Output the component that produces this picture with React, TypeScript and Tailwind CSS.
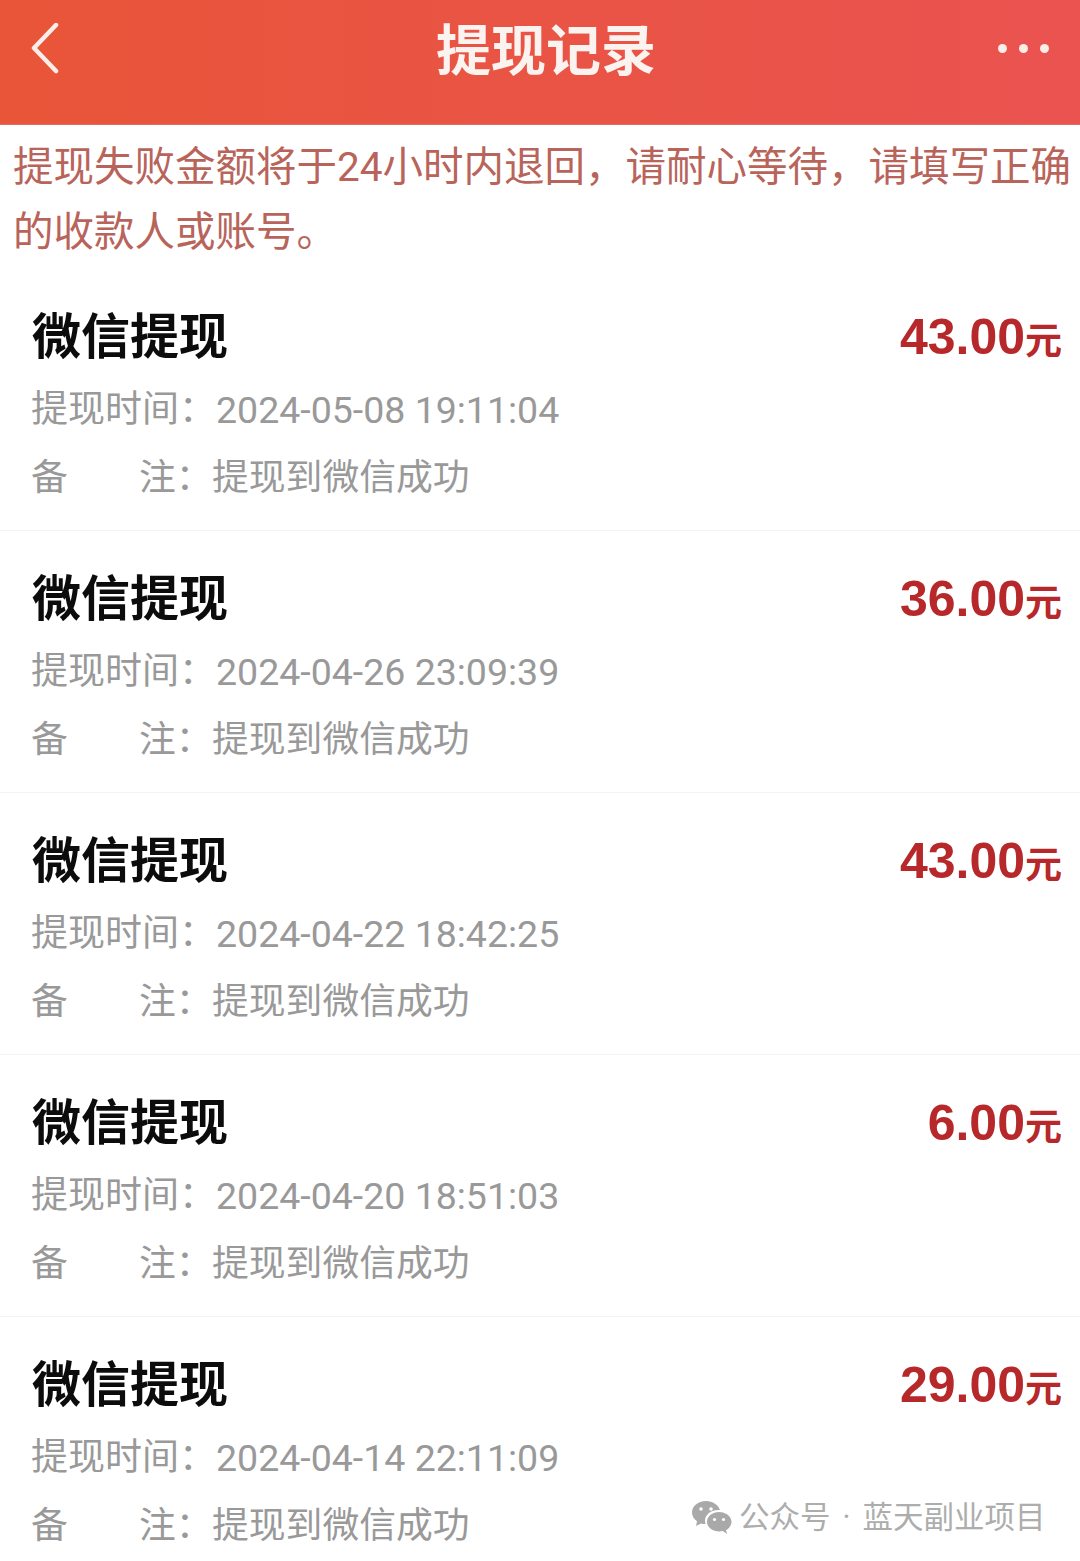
const cjk = "font-['Roboto','Noto_Sans_CJK_SC',sans-serif]";

const records = [
  { amount: "43.00", time: "2024-05-08 19:11:04" },
  { amount: "36.00", time: "2024-04-26 23:09:39" },
  { amount: "43.00", time: "2024-04-22 18:42:25" },
  { amount: "6.00", time: "2024-04-20 18:51:03" },
  { amount: "29.00", time: "2024-04-14 22:11:09" },
];

const RecordRow = ({ amount, time, last }: { amount: string; time: string; last: boolean }) => (
  <div className={`h-[262px] pt-[40px] pl-[31px] pr-[18px] ${last ? "" : "border-b border-[#f3f3f3]"}`}>
    <div className="flex items-center justify-between h-[58px]">
      <span className="ml-[1px] text-[49px] leading-[58px] font-bold text-[#0c0c0c]">微信提现</span>
      <span className="mt-[2px] flex items-baseline text-[#b7282b] font-bold">
        <span className="text-[50px] leading-[58px] font-['Liberation_Sans',sans-serif]">{amount}</span>
        <span className="text-[37px] leading-[58px]">元</span>
      </span>
    </div>
    <div className="mt-[21px] flex h-[44px] items-center text-[37px] leading-[44px] text-[#999999]">
      <span className="w-[185px] shrink-0">提现时间：</span>
      <span className="text-[37.5px]">{time}</span>
    </div>
    <div className="mt-[24px] flex h-[44px] items-center text-[36.8px] leading-[44px] text-[#999999]">
      <span className="w-[108px] shrink-0">备</span>
      <span className="w-[73px] shrink-0">注：</span>
      <span>提现到微信成功</span>
    </div>
  </div>
);

export default function App() {
  return (
    <div className={`w-[1080px] h-[1561px] overflow-hidden bg-white relative ${cjk}`}>
      <header className="h-[125px] pb-[20px] flex items-center justify-between pl-[30px] pr-[31px] bg-gradient-to-r from-[#e85538] to-[#ea5350] border-b border-[#d9706a]">
        <svg width="32" height="52" viewBox="0 0 32 52" fill="none" className="mb-[6px]">
          <path d="M26 2 L4 25 L26 48" stroke="#fbeee9" strokeWidth="4.5" strokeLinecap="round" strokeLinejoin="round" />
        </svg>
        <h1 className="text-[55px] leading-[64px] font-bold text-[#fbf3ef] mb-[3px] ml-[32px]">提现记录</h1>
        <div className="flex gap-[12px] mb-[8px]">
          <span className="w-[9px] h-[9px] rounded-full bg-[#fbeee9]" />
          <span className="w-[9px] h-[9px] rounded-full bg-[#fbeee9]" />
          <span className="w-[9px] h-[9px] rounded-full bg-[#fbeee9]" />
        </div>
      </header>

      <p className="pl-[13px] pr-[6px] pt-[10px] text-[40.5px] leading-[65px] text-[#b9645a]">
        提现失败金额将于24小时内退回，请耐心等待，请填写正确的收款人或账号。
      </p>

      <div className="mt-[4px]">
        {records.map((r, i) => (
          <RecordRow key={i} amount={r.amount} time={r.time} last={i === records.length - 1} />
        ))}
      </div>

      {/* watermark */}
      <div className="absolute left-[691px] top-[1498px] flex items-center gap-[7px] text-[#adadad]">
        <svg width="41" height="36" viewBox="0 0 41 36">
          <path d="M15 1C7 1 1 6.200 1 12.500c0 3.600 2 6.600 5 8.800L5 26l5-2.600c1.500.4 3 .7 4.600.7-.4-1.200-.6-2.300-.6-3.500C14 14.700 20 10 27.500 10c.5 0 1 0 1.400.1C27.500 5 21.800 1 15 1z" fill="#a9a9a9" />
          <circle cx="10" cy="9" r="1.800" fill="#fff" />
          <circle cx="20" cy="9" r="1.800" fill="#fff" />
          <path d="M28 12c-6.600 0-12 4.300-12 9.700s5.400 9.700 12 9.700c1.300 0 2.600-.2 3.800-.5L36 34l-1-3.800c3.400-1.800 5.500-5 5.500-8.500C40.500 16.300 34.600 12 28 12z" fill="#a9a9a9" />
          <circle cx="23.500" cy="19.500" r="1.600" fill="#fff" />
          <circle cx="32.500" cy="19.500" r="1.600" fill="#fff" />
        </svg>
        <span className="flex text-[30.5px] leading-[40px]">
          <span>公众号</span>
          <span className="w-[32px] text-center">·</span>
          <span>蓝天副业项目</span>
        </span>
      </div>
    </div>
  );
}
